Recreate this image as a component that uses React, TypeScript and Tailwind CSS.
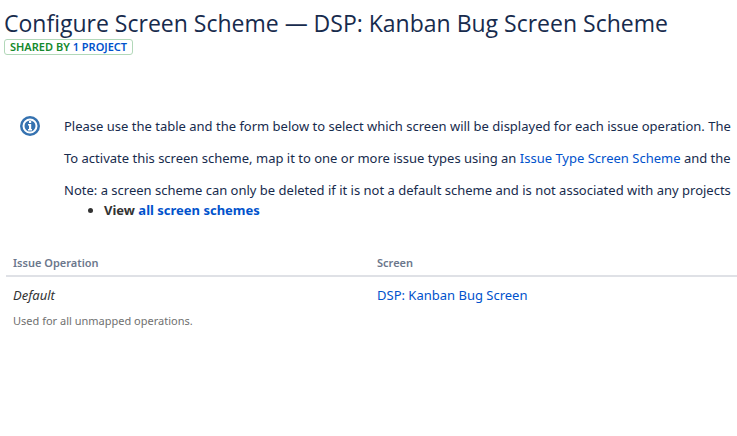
function InfoIcon() {
  return (
    <svg viewBox="0 0 20 20" className="size-5 shrink-0" aria-hidden="true">
      <circle cx="10" cy="10" r="10" fill="#3572b0" />
      <circle cx="10" cy="10" r="6.500" fill="#3572b0" stroke="#fff" strokeWidth="2" />
      <path d="M9 5h2.200v2H9zM8 8h3.200v5H12v1.500H8V13h1V9.500H8z" fill="#fff" />
    </svg>
  );
}

const rows = [
  { operation: "Default", description: "Used for all unmapped operations.", screen: "DSP: Kanban Bug Screen" },
];

export default function App() {
  return (
    <main className="overflow-hidden bg-white pt-2 pl-1 font-['Noto_Sans','Open_Sans',sans-serif] text-[13px] leading-5 whitespace-nowrap text-[#172b4d]">
      <header>
        <h1 className="font-['Open_Sans',sans-serif] text-[23px] leading-[31px] font-medium">
          Configure Screen Scheme — DSP: Kanban Bug Screen Scheme
        </h1>
        <div className="flex">
          <span className="rounded-[3px] border border-[#b2d8b9] px-[5px] text-[11px] leading-[14px] font-semibold text-[#14892c] uppercase">
            Shared by{" "}
            <a href="#project" className="text-[#0052cc]">1 project</a>
          </span>
        </div>
      </header>

      <section className="mt-[61px] flex gap-6 pl-4">
        <InfoIcon />
        <div>
          <div className="flex flex-col gap-3">
            <p>
              Please use the table and the form below to select which screen will be displayed for each issue operation. The
            </p>
            <p>
              To activate this screen scheme, map it to one or more issue types using an{" "}
              <a href="#issue-type-screen-schemes" className="text-[#0052cc]">Issue Type Screen Scheme</a> and the
            </p>
            <p>
              Note: a screen scheme can only be deleted if it is not a default scheme and is not associated with any projects
            </p>
          </div>
          <ul className="list-disc pl-10 font-bold text-[#333]">
            <li>
              View <a href="#screen-schemes" className="text-[#0052cc]">all screen schemes</a>
            </li>
          </ul>
        </div>
      </section>

      <table className="mt-[33px] ml-[2px] w-full table-fixed text-left">
        <thead>
          <tr className="border-b-2 border-[#dfe1e6] text-[11px] text-[#6b778c]">
            <th className="w-[364px] px-[7px] pb-[2px] font-semibold">Issue Operation</th>
            <th className="px-[7px] pb-[2px] font-semibold">Screen</th>
          </tr>
        </thead>
        <tbody>
          {rows.map((row) => (
            <tr key={row.operation} className="align-top">
              <td className="px-[7px] pt-2">
                <em className="text-[#333]">{row.operation}</em>
                <p className="mt-[6px] text-[11px] text-[#707070]">{row.description}</p>
              </td>
              <td className="px-[7px] pt-2">
                <a href="#screen" className="text-[#0052cc]">{row.screen}</a>
              </td>
            </tr>
          ))}
        </tbody>
      </table>
    </main>
  );
}
